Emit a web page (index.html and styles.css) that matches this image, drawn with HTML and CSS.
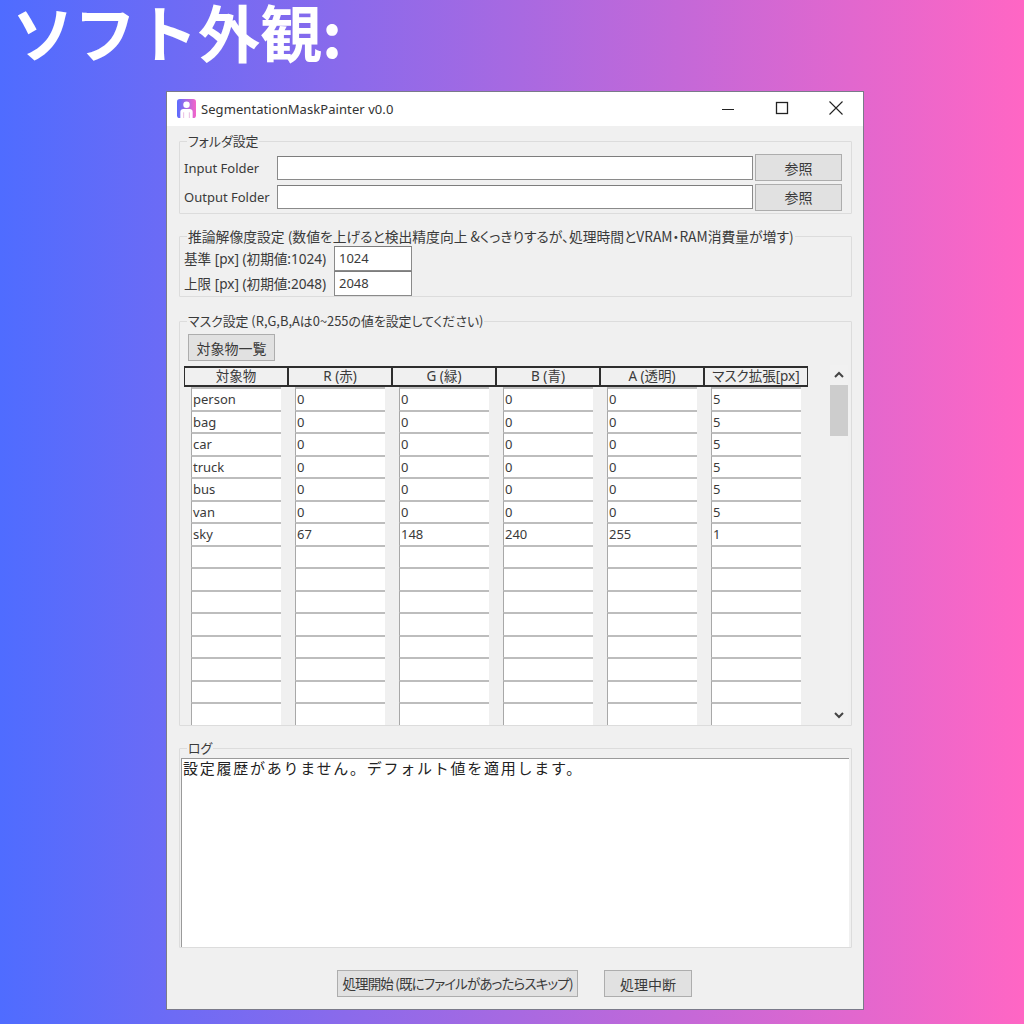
FILE: index.html
```html
<!DOCTYPE html>
<html lang="ja">
<head>
<meta charset="utf-8">
<title>SegmentationMaskPainter</title>
<link rel="stylesheet" href="styles.css">
</head>
<body>
<h1 class="headline">ソフト外観:</h1>
<main class="window">
  <header class="titlebar">
    <svg class="app-icon" viewBox="0 0 20 20">
      <defs><linearGradient id="ig" x1="0" y1="0" x2="1" y2="0"><stop offset="0" stop-color="#5a6cff"/><stop offset="1" stop-color="#f565c8"/></linearGradient></defs>
      <rect width="20" height="20" rx="3" fill="url(#ig)"/>
      <circle cx="10" cy="6" r="3.4" fill="#fff"/>
      <path d="M3.5 20v-6.5c0-2 1.500-3 3-3h7c1.500 0 3 1 3 3V20z" fill="#fff"/>
      <path d="M7 14v6M13 14v6" stroke="#e8b8e0" stroke-width="1"/>
    </svg>
    <span class="app-title">SegmentationMaskPainter v0.0</span>
    <div class="controls">
      <svg viewBox="0 0 54 34"><path d="M21 17.500h12" stroke="#222" fill="none"/></svg>
      <svg viewBox="0 0 54 34"><rect x="21.500" y="10.500" width="11" height="11" stroke="#222" stroke-width="1.300" fill="none"/></svg>
      <svg viewBox="0 0 54 34"><path d="M20.500 9.500l13 13M33.500 9.500l-13 13" stroke="#222" stroke-width="1.100" fill="none"/></svg>
    </div>
  </header>
  <div class="content">
    <fieldset class="group folder-group">
      <legend>フォルダ設定</legend>
      <div class="folder-row">
        <span class="label">Input Folder</span><div class="field"></div><button class="btn browse">参照</button>
      </div>
      <div class="folder-row">
        <span class="label">Output Folder</span><div class="field"></div><button class="btn browse">参照</button>
      </div>
    </fieldset>

    <fieldset class="group res-group">
      <legend>推論解像度設定 (数値を上げると検出精度向上 &amp;くっきりするが、処理時間とVRAM・RAM消費量が増す)</legend>
      <div class="res-row"><span class="label res-label">基準 [px] (初期値:1024)</span><div class="field res-field">1024</div></div>
      <div class="res-row"><span class="label res-label">上限 [px] (初期値:2048)</span><div class="field res-field">2048</div></div>
    </fieldset>

    <fieldset class="group mask-group">
      <legend>マスク設定 (R,G,B,Aは0~255の値を設定してください)</legend>
      <button class="btn list-btn">対象物一覧</button>
      <div class="table-wrap">
        <div class="table">
          <div class="head-row">
            <div class="th">対象物</div><div class="th">R (赤)</div><div class="th">G (緑)</div><div class="th">B (青)</div><div class="th">A (透明)</div><div class="th">マスク拡張[px]</div>
          </div>
          <div class="row"><div class="cell">person</div><div class="cell">0</div><div class="cell">0</div><div class="cell">0</div><div class="cell">0</div><div class="cell last">5</div></div>
          <div class="row"><div class="cell">bag</div><div class="cell">0</div><div class="cell">0</div><div class="cell">0</div><div class="cell">0</div><div class="cell last">5</div></div>
          <div class="row"><div class="cell">car</div><div class="cell">0</div><div class="cell">0</div><div class="cell">0</div><div class="cell">0</div><div class="cell last">5</div></div>
          <div class="row"><div class="cell">truck</div><div class="cell">0</div><div class="cell">0</div><div class="cell">0</div><div class="cell">0</div><div class="cell last">5</div></div>
          <div class="row"><div class="cell">bus</div><div class="cell">0</div><div class="cell">0</div><div class="cell">0</div><div class="cell">0</div><div class="cell last">5</div></div>
          <div class="row"><div class="cell">van</div><div class="cell">0</div><div class="cell">0</div><div class="cell">0</div><div class="cell">0</div><div class="cell last">5</div></div>
          <div class="row"><div class="cell">sky</div><div class="cell">67</div><div class="cell">148</div><div class="cell">240</div><div class="cell">255</div><div class="cell last">1</div></div>
          <div class="row"><div class="cell"></div><div class="cell"></div><div class="cell"></div><div class="cell"></div><div class="cell"></div><div class="cell last"></div></div>
          <div class="row"><div class="cell"></div><div class="cell"></div><div class="cell"></div><div class="cell"></div><div class="cell"></div><div class="cell last"></div></div>
          <div class="row"><div class="cell"></div><div class="cell"></div><div class="cell"></div><div class="cell"></div><div class="cell"></div><div class="cell last"></div></div>
          <div class="row"><div class="cell"></div><div class="cell"></div><div class="cell"></div><div class="cell"></div><div class="cell"></div><div class="cell last"></div></div>
          <div class="row"><div class="cell"></div><div class="cell"></div><div class="cell"></div><div class="cell"></div><div class="cell"></div><div class="cell last"></div></div>
          <div class="row"><div class="cell"></div><div class="cell"></div><div class="cell"></div><div class="cell"></div><div class="cell"></div><div class="cell last"></div></div>
          <div class="row"><div class="cell"></div><div class="cell"></div><div class="cell"></div><div class="cell"></div><div class="cell"></div><div class="cell last"></div></div>
          <div class="row"><div class="cell"></div><div class="cell"></div><div class="cell"></div><div class="cell"></div><div class="cell"></div><div class="cell last"></div></div>
        </div>
        <div class="scrollbar">
          <svg class="arrow" viewBox="0 0 18 20"><path d="M5 12l4-4 4 4" stroke="#444" stroke-width="2" fill="none"/></svg>
          <div class="thumb"></div>
          <div class="track"></div>
          <svg class="arrow" viewBox="0 0 18 20"><path d="M5 8l4 4 4-4" stroke="#444" stroke-width="2" fill="none"/></svg>
        </div>
      </div>
    </fieldset>

    <fieldset class="group log-group">
      <legend>ログ</legend>
      <div class="log">設定履歴がありません。デフォルト値を適用します。</div>
    </fieldset>

    <div class="actions">
      <button class="btn start">処理開始 (既にファイルがあったらスキップ)</button>
      <button class="btn stop">処理中断</button>
    </div>
  </div>
</main>
</body>
</html>
```

FILE: styles.css
```css
* { box-sizing: border-box; }
html, body { margin: 0; padding: 0; }
body {
  width: 1024px;
  height: 1024px;
  overflow: hidden;
  background: linear-gradient(90deg, #4f6cff 0%, #ff66c4 100%);
  font-family: "Noto Sans", "Noto Sans CJK JP", sans-serif;
  font-feature-settings: "palt";
  font-size: 13px;
  color: #3a3a3a;
}
.headline {
  margin: 0;
  height: 91px;
  padding: 0 0 0 12px;
  font-family: "Noto Sans CJK JP", sans-serif;
  font-feature-settings: normal;
  font-size: 62px;
  line-height: 62px;
  font-weight: 700;
  color: #fff;
}
.window {
  width: 698px;
  height: 919px;
  margin-left: 166px;
  border: 1px solid #7a7a8a;
  background: #f0f0f0;
  display: flex;
  flex-direction: column;
}
.titlebar {
  height: 34px;
  flex: none;
  background: #fff;
  display: flex;
  align-items: center;
  padding-left: 10px;
}
.app-icon { width: 19px; height: 19px; flex: none; margin-top: -1px; }
.app-title { margin-left: 5px; font-size: 13px; letter-spacing: 0.07px; color: #333; }
.controls { margin-left: auto; display: flex; }
.controls svg { width: 54px; height: 34px; display: block; }
.content {
  flex: 1;
  padding: 8px 11px 0 12px;
  display: flex;
  flex-direction: column;
}
.group {
  margin: 0;
  padding: 0;
  min-width: 0;
  border: 1px solid #dcdcdc;
  border-radius: 1px;
}
.group legend {
  margin-left: 3px;
  padding: 0 1px;
  font-family: "Noto Sans CJK JP", sans-serif;
  font-size: 12.900px;
  line-height: 14px;
  white-space: nowrap;
}
.label { font-size: 13px; line-height: 18px; color: #3a3a3a; }

.folder-group { height: 80px; padding: 5px 8px 0 4px; }
.folder-row { display: flex; align-items: center; height: 29.500px; }
.folder-row .label { width: 93px; flex: none; }
.field {
  background: #fff;
  border: 1px solid #8a8a8a;
  border-top-color: #7d7d7d;
  font-size: 13px;
}
.folder-row .field { width: 476px; height: 24px; flex: none; }
.btn {
  font-family: "Noto Sans CJK JP", sans-serif;
  font-feature-settings: "palt";
  font-size: 14px;
  line-height: 1;
  color: #3a3a3a;
  background: #e1e1e1;
  border: 1px solid #adadad;
  padding: 0;
}
.browse { width: 87px; height: 27px; margin-left: 2px; flex: none; }

.res-group { height: 68px; margin-top: 15px; padding: 3px 0 0 4px; }
.res-group legend { font-size: 13.800px; }
.res-row { display: flex; align-items: center; height: 25px; }
.res-label { width: 150px; flex: none; font-family: "Noto Sans", "Noto Sans CJK JP", sans-serif; font-size: 13.600px; white-space: nowrap; }
.res-field { width: 78px; height: 25px; padding-left: 4px; line-height: 23px; }

.mask-group { height: 412px; margin-top: 17px; }
.mask-group legend { margin-left: 7px; }
.list-btn { display: block; width: 87px; height: 27px; margin: 6px 0 0 8px; }
.table-wrap { display: flex; margin-top: 3px; height: 362px; overflow: hidden; }
.table { width: 625px; margin-left: 4px; flex: none; }
.head-row { display: grid; grid-template-columns: repeat(6, 104px); height: 21px; margin-top: 2px; }
.th {
  border: 2px solid #2e2e2e;
  border-width: 2px 1px 2px 1px;
  font-family: "Noto Sans", "Noto Sans CJK JP", sans-serif;
  font-size: 13.500px;
  text-align: center;
  line-height: 17px;
  white-space: nowrap;
  background: #f0f0f0;
}
.row { display: grid; grid-template-columns: repeat(6, 104px); height: 22.500px; padding-left: 7px; }
.cell {
  width: 90px;
  background: #fff;
  border-top: 2px solid #bdbdbd;
  border-left: 1px solid #a8a8a8;
  padding-left: 1px;
  font-size: 13px;
  line-height: 21px;
  color: #3a3a3a;
}
.scrollbar {
  width: 18px;
  margin-left: 21px;
  margin-top: 1px;
  height: 360px;
  background: #f1f1f1;
  display: flex;
  flex-direction: column;
}
.arrow { width: 18px; height: 20px; display: block; flex: none; }
.thumb { height: 51px; background: #cdcdcd; flex: none; }
.track { flex: 1; }

.log-group { height: 207px; margin-top: 15px; padding: 3px 2px 0 1px; }
.log-group legend { margin-left: 6px; }
.log {
  height: 189px;
  background: #fff;
  border-top: 1px solid #9a9a9a;
  border-left: 1px solid #9a9a9a;
  padding: 0 0 0 1px;
  font-family: "Noto Sans CJK JP", sans-serif;
  font-feature-settings: normal;
  font-size: 15px;
  line-height: 17px;
  letter-spacing: 1.750px;
  color: #222;
}
.actions { display: flex; margin-top: 22px; padding-left: 158px; }
.start { width: 241px; height: 27px; white-space: nowrap; font-size: 13.500px; letter-spacing: -0.850px; }
.stop { width: 88px; height: 27px; margin-left: 26px; }
```
